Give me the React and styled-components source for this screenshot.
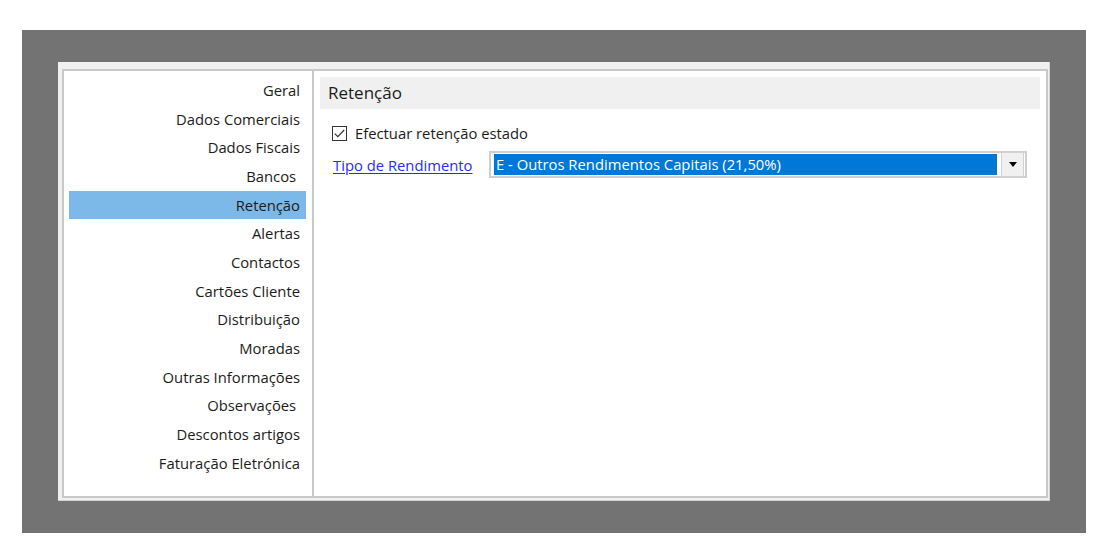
// Imports
import styled, {createGlobalStyle} from 'styled-components'



// Styles
const GlobalStyle = createGlobalStyle`
    html, body {
        margin:0;
        padding:0;
        background-color:#fff;
    }
    body {
        font-family:"Open Sans", "Noto Sans", "Liberation Sans", sans-serif;
        color:#1b1b1b;
    }
`
const Backdrop = styled.div`
    width:1064px;
    height:503px;
    margin:30px 0 0 22px;
    padding:32px 0 0 36px;
    box-sizing:border-box;
    background-color:#737373;
`
const Panel = styled.div`
    width:992px;
    height:439px;
    box-sizing:border-box;
    padding:7px 1px 2px 4px;
    background-color:#f0f0f0;
    border-right:1px solid #d4d4d4;
    border-bottom:1px solid #d4d4d4;
`
const Frame = styled.div`
    width:100%;
    height:100%;
    display:flex;
    box-sizing:border-box;
    border:2px solid #c9c9c9;
    background-color:#fff;
`
const Sidebar = styled.ul`
    margin:0;
    width:250px;
    flex-shrink:0;
    list-style:none;
    padding:5px 6px 0 5px;
    box-sizing:border-box;
    border-right:2px solid #c9c9c9;
`
const SideItem = styled.li`
    height:28.67px;
    font-size:14.8px;
    text-align:right;
    padding-right:6px;
    line-height:28.67px;
    white-space:pre;
    background-color:${({$active}) => $active ? '#7cb9e8' : 'transparent'};
`
const Content = styled.section`
    flex:1;
    padding:6px 6px 0 6px;
`
const Header = styled.h2`
    margin:0;
    height:32px;
    font-size:17px;
    font-weight:400;
    padding-left:8px;
    line-height:32px;
    background-color:#f0f0f0;
`
const CheckRow = styled.label`
    display:flex;
    gap:8px;
    font-size:14.8px;
    margin:15px 0 0 12px;
    align-items:center;
    height:18px;
`
const CheckBox = styled.span`
    width:15px;
    height:15px;
    display:flex;
    align-items:center;
    justify-content:center;
    box-sizing:border-box;
    border:1px solid #333;
    background-color:#fff;
`
const FieldRow = styled.div`
    display:flex;
    margin:9px 0 0 13px;
    align-items:center;
`
const FieldLink = styled.a`
    width:156px;
    color:#2a2aff;
    font-size:14.8px;
    cursor:pointer;
    text-decoration:underline;
    text-underline-offset:2px;
`
const Select = styled.div`
    width:538px;
    height:27px;
    display:flex;
    gap:4px;
    padding:1px 1px 1px 3px;
    box-sizing:border-box;
    align-items:center;
    border:2px solid #cfcfcf;
    background-color:#fff;
`
const SelectValue = styled.div`
    flex:1;
    height:21px;
    color:#fff;
    font-size:14.8px;
    padding-left:2px;
    line-height:21px;
    background-color:#0078d7;
`
const SelectButton = styled.span`
    width:23px;
    height:25px;
    display:flex;
    align-items:center;
    justify-content:center;
    box-sizing:border-box;
    border:1px solid #d2d2d2;
    background-color:#f0f0f0;
`



// Data
const sections = [
    'Geral',
    'Dados Comerciais',
    'Dados Fiscais',
    'Bancos\u00a0',
    'Retenção',
    'Alertas',
    'Contactos',
    'Cartões Cliente',
    'Distribuição',
    'Moradas',
    'Outras Informações',
    'Observações\u00a0',
    'Descontos artigos',
    'Faturação Eletrónica',
]



// Main Function
const App = () => {
  return (
    <>
        <GlobalStyle/>
        <Backdrop>
            <Panel>
                <Frame>
                    <Sidebar>
                        {sections.map(name => (
                            <SideItem key={name} $active={name === 'Retenção'}>{name}</SideItem>
                        ))}
                    </Sidebar>
                    <Content>
                        <Header>Retenção</Header>
                        <CheckRow>
                            <CheckBox>
                                <svg width="11" height="9" viewBox="0 0 11 9">
                                    <polyline points="0.8,4.6 3.8,7.6 10.2,1" fill="none" stroke="#333" strokeWidth="1.2"/>
                                </svg>
                            </CheckBox>
                            Efectuar retenção estado
                        </CheckRow>
                        <FieldRow>
                            <FieldLink>Tipo de Rendimento</FieldLink>
                            <Select>
                                <SelectValue>E - Outros Rendimentos Capitais (21,50%)</SelectValue>
                                <SelectButton>
                                    <svg width="8" height="5" viewBox="0 0 8 5">
                                        <polygon points="0,0 8,0 4,5" fill="#000"/>
                                    </svg>
                                </SelectButton>
                            </Select>
                        </FieldRow>
                    </Content>
                </Frame>
            </Panel>
        </Backdrop>
    </>
  )
}



// Export
export default App
